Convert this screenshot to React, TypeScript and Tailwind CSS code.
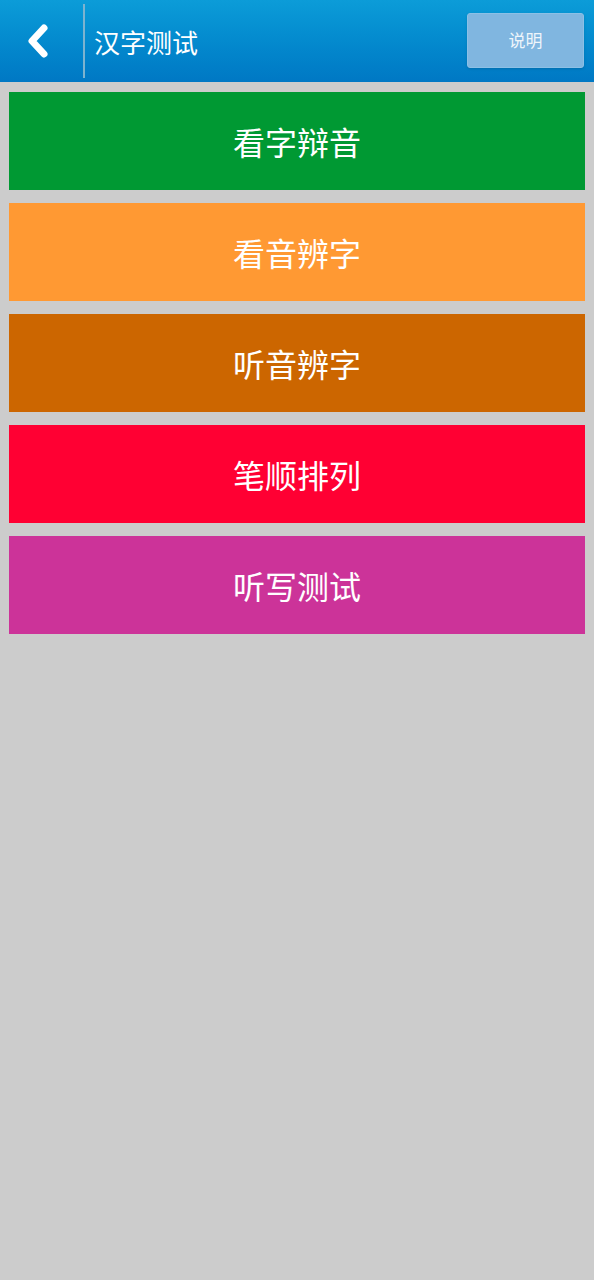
import React from 'react';

const items = [
  { label: '看字辩音', color: 'bg-[#009933]' },
  { label: '看音辨字', color: 'bg-[#ff9933]' },
  { label: '听音辨字', color: 'bg-[#cc6600]' },
  { label: '笔顺排列', color: 'bg-[#ff0033]' },
  { label: '听写测试', color: 'bg-[#cc3399]' },
];

const App: React.FC = () => {
  return (
    <div
      className="min-h-[1280px] w-[594px] bg-[#cccccc]"
      style={{ fontFamily: '"Noto Sans CJK SC", "Liberation Sans", sans-serif' }}
    >
      {/* header */}
      <div className="flex h-[82px] items-center bg-gradient-to-b from-[#0c9cd8] to-[#0078c4]">
        <button className="flex h-full w-[83px] items-center justify-center">
          <svg width="28" height="36" viewBox="0 0 28 36" className="-ml-[6px]">
            <path d="M19 5 L7 18 L19 31" stroke="#ffffff" strokeWidth="7" fill="none" strokeLinecap="round" strokeLinejoin="round" />
          </svg>
        </button>
        <div className="h-[74px] w-[2px] bg-[#7db3cf]" />
        <div className="ml-[9px] flex-1 text-[26px] text-white">汉字测试</div>
        <button className="mr-[10px] mb-[2px] h-[55px] w-[117px] rounded-[3px] border border-[#8cc0e6] bg-[#80b6e0] text-[17px] text-[#eef5fb] shadow-sm">
          说明
        </button>
      </div>

      {/* list */}
      <div className="flex flex-col gap-[13px] px-[9px] pt-[10px]">
        {items.map((item) => (
          <div
            key={item.label}
            className={`${item.color} flex h-[98px] items-center justify-center text-[32px] text-white`}
          >
            {item.label}
          </div>
        ))}
      </div>
    </div>
  );
};

export default App;
